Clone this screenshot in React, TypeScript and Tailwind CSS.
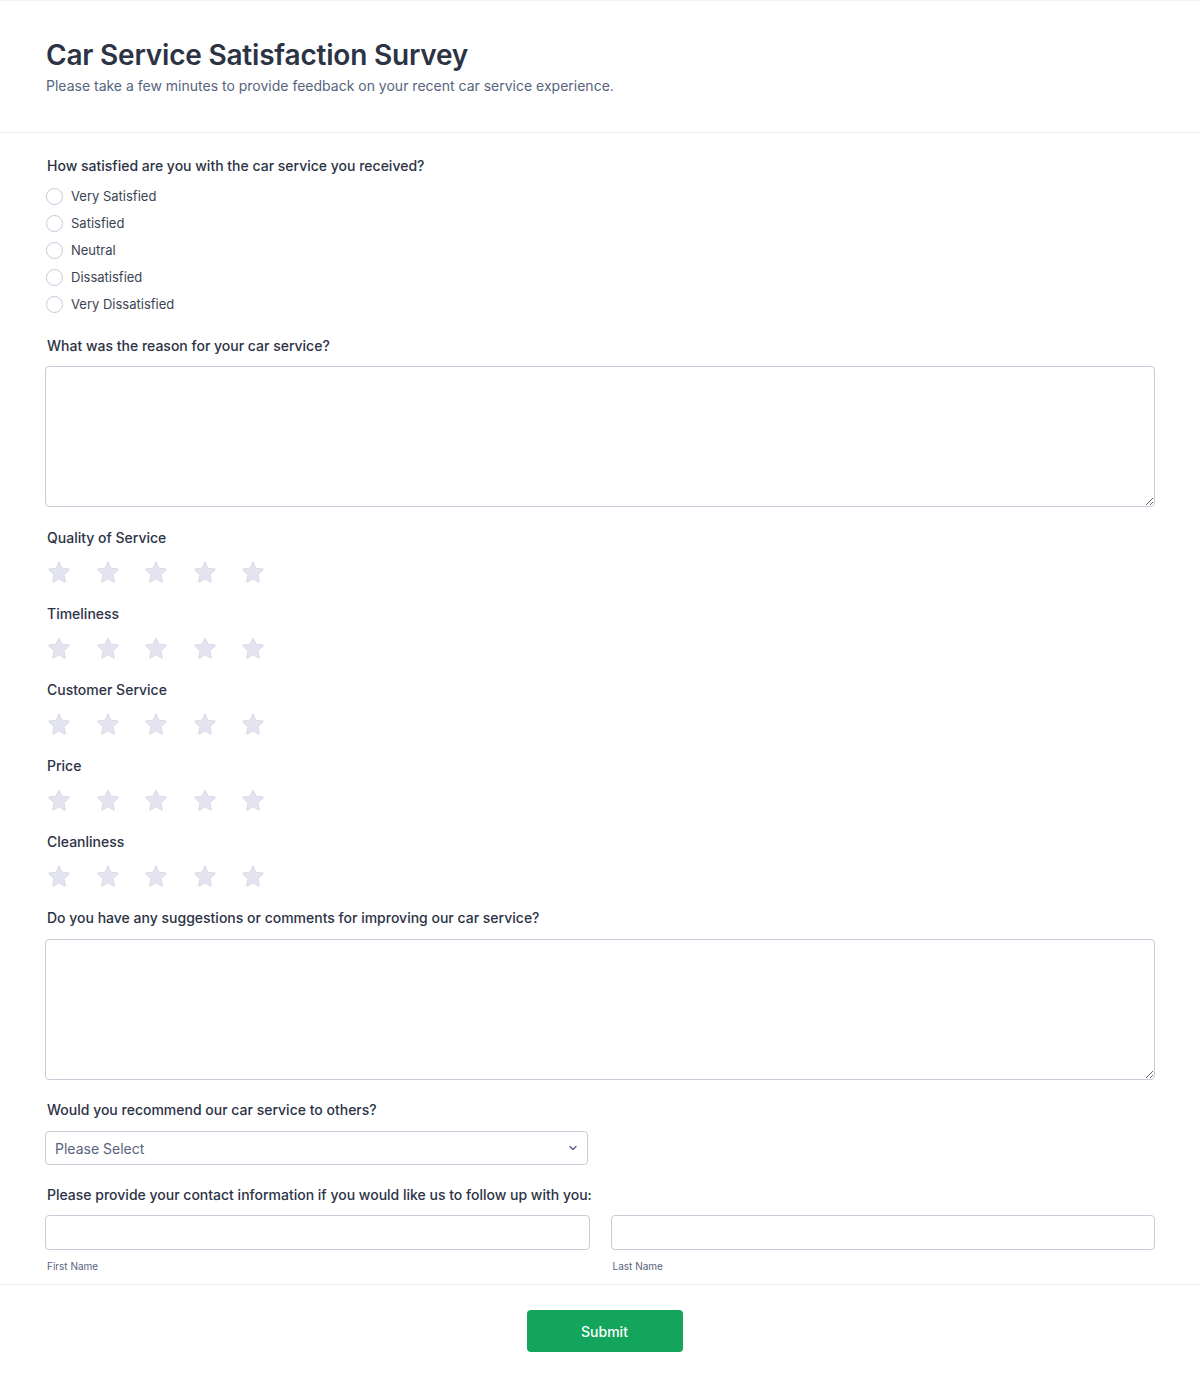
import React from 'react';

const font = { fontFamily: 'Inter, "Noto Sans", sans-serif' };

function Star() {
  return (
    <svg width="26" height="26" viewBox="0 0 24 24" className="shrink-0">
      <path
        d="M12 2.6l2.7 5.9 6.4.7c.5.1.7.7.3 1l-4.8 4.3 1.4 6.3c.1.5-.4.9-.9.6L12 18.2l-5.1 3.2c-.5.3-1-.1-.9-.6l1.4-6.3L2.6 10.2c-.4-.3-.2-.9.3-1l6.4-.7L12 2.6z"
        fill="#e3e4ef"
        stroke="#d6d8e6"
        strokeWidth="0.8"
        strokeLinejoin="round"
      />
    </svg>
  );
}

function Label({ children, className = '' }: { children: React.ReactNode; className?: string }) {
  return <div className={`text-[14px] leading-[20px] font-medium text-[#2c3345] pl-[2px] ${className}`}>{children}</div>;
}

function Rating({ title }: { title: string }) {
  return (
    <div className="mt-[19px]">
      <Label>{title}</Label>
      <div className="mt-[11px] flex gap-[22.5px] pl-[1px]">
        {[0, 1, 2, 3, 4].map((i) => (
          <Star key={i} />
        ))}
      </div>
    </div>
  );
}

const options = ['Very Satisfied', 'Satisfied', 'Neutral', 'Dissatisfied', 'Very Dissatisfied'];
const ratings = ['Quality of Service', 'Timeliness', 'Customer Service', 'Price', 'Cleanliness'];

export default function App() {
  return (
    <div className="w-[1200px] min-h-[1386px] bg-white border-t border-[#f3f4f8]" style={font}>
      <div className="h-[132px] border-b border-[#f0f1f5] px-[46px] pt-[36px]">
        <h1 className="text-[28px] leading-[36px] font-semibold text-[#2c3345] tracking-[-0.2px]">
          Car Service Satisfaction Survey
        </h1>
        <p className="mt-[3px] text-[14px] leading-[20px] text-[#57647e]">
          Please take a few minutes to provide feedback on your recent car service experience.
        </p>
      </div>

      <div className="px-[45px] pt-[23px] pb-[11px] border-b border-[#f0f1f5]">
        <Label>How satisfied are you with the car service you received?</Label>
        <div className="mt-[7px] pl-[1px]">
          {options.map((o) => (
            <div key={o} className="h-[27px] flex items-center gap-[8px]">
              <span className="w-[17px] h-[17px] rounded-full border border-[#c3cad8] bg-white" />
              <span className="text-[13px] text-[#3b4352]">{o}</span>
            </div>
          ))}
        </div>

        <Label className="mt-[18px]">What was the reason for your car service?</Label>
        <textarea className="mt-[10px] block w-full h-[141px] rounded-[4px] border border-[#c8ccd9] bg-white outline-none" />

        <div className="mt-[2px] flex flex-col">
          {ratings.map((r) => (
            <Rating key={r} title={r} />
          ))}
        </div>

        <Label className="mt-[19px]">Do you have any suggestions or comments for improving our car service?</Label>
        <textarea className="mt-[11px] block w-full h-[141px] rounded-[4px] border border-[#c8ccd9] bg-white outline-none" />

        <Label className="mt-[20px]">Would you recommend our car service to others?</Label>
        <div className="mt-[11px] w-[543px] h-[34px] rounded-[4px] border border-[#c8ccd9] flex items-center justify-between pl-[9px] pr-[9px]">
          <span className="text-[14px] text-[#57647e]">Please Select</span>
          <svg width="10" height="10" viewBox="0 0 10 10">
            <path d="M2 3.5l3 3 3-3" fill="none" stroke="#57647e" strokeWidth="1.4" strokeLinecap="round" strokeLinejoin="round" />
          </svg>
        </div>

        <Label className="mt-[20px]">Please provide your contact information if you would like us to follow up with you:</Label>
        <div className="mt-[10px] flex gap-[21px]">
          <div className="flex-1">
            <div className="h-[35px] rounded-[4px] border border-[#c8ccd9]" />
            <div className="mt-[9px] pl-[2px] text-[10px] leading-[14px] text-[#57647e]">First Name</div>
          </div>
          <div className="flex-1">
            <div className="h-[35px] rounded-[4px] border border-[#c8ccd9]" />
            <div className="mt-[9px] pl-[2px] text-[10px] leading-[14px] text-[#57647e]">Last Name</div>
          </div>
        </div>
      </div>

      <div className="pt-[25px] pb-[34px] flex justify-center pl-[9px]">
        <button className="w-[156px] h-[42px] rounded-[4px] bg-[#12a55b] text-white text-[14px] font-medium">
          Submit
        </button>
      </div>
    </div>
  );
}
